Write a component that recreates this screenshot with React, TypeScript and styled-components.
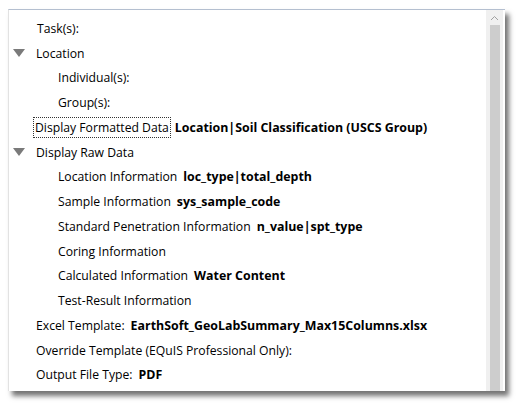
import React from "react";
import styled, { createGlobalStyle } from "styled-components";

const Global = createGlobalStyle`
  html, body { margin: 0; padding: 0; background: #ffffff; }
  body { font-family: "Open Sans", "Noto Sans", sans-serif; }
`;

const Page = styled.div`
  width: 521px;
  height: 408px;
  padding: 9px 0 0 8px;
  box-sizing: border-box;
`;

const Panel = styled.div`
  width: 497px;
  height: 382px;
  background: #fff;
  border-top: 1px solid #b4bfd0;
  border-left: 1px solid #e2e2e2;
  box-shadow: 4px 5px 5px rgba(0, 0, 0, 0.55);
  display: flex;
  box-sizing: border-box;
`;

const List = styled.div`
  flex: 1;
  display: flex;
  flex-direction: column;
  padding-top: 6px;
`;

const Row = styled.div<{ $indent: number }>`
  height: 24.75px;
  display: flex;
  align-items: center;
  padding-left: ${(p) => p.$indent}px;
  font-size: 12.2px;
  color: #000;
  white-space: nowrap;
`;

const Arrow = styled.span`
  width: 0;
  height: 0;
  border-left: 6px solid transparent;
  border-right: 6px solid transparent;
  border-top: 8px solid #7a7a7a;
  margin-left: -22px;
  margin-right: 10px;
`;

const Label = styled.span<{ $focus?: boolean }>`
  padding: 0 1px;
  outline: ${(p) => (p.$focus ? "1px dotted #333" : "none")};
  outline-offset: 0;
  line-height: 19px;
`;

const Value = styled.span`
  font-weight: 700;
  font-size: 12.4px;
  margin-left: 5px;
  color: #000;
`;

const Scrollbar = styled.div`
  width: 17px;
  background: #f0f0f0;
  display: flex;
  flex-direction: column;
  align-items: center;
  margin-right: 2px;
`;

const ArrowBtn = styled.div`
  height: 15px;
  display: flex;
  align-items: center;
  justify-content: center;
`;

const Thumb = styled.div`
  width: 10px;
  flex: 1;
  background: #cdcdcd;
`;

type Item = { label: string; value?: string; indent: number; arrow?: boolean; focus?: boolean };

const items: Item[] = [
  { label: "Task(s):", indent: 27 },
  { label: "Location", indent: 26, arrow: true },
  { label: "Individual(s):", indent: 48 },
  { label: "Group(s):", indent: 48 },
  { label: "Display Formatted Data", value: "Location|Soil Classification (USCS Group)", indent: 25, focus: true },
  { label: "Display Raw Data", indent: 26, arrow: true },
  { label: "Location Information", value: "loc_type|total_depth", indent: 48 },
  { label: "Sample Information", value: "sys_sample_code", indent: 48 },
  { label: "Standard Penetration Information", value: "n_value|spt_type", indent: 48 },
  { label: "Coring Information", indent: 48 },
  { label: "Calculated Information", value: "Water Content", indent: 48 },
  { label: "Test-Result Information", indent: 48 },
  { label: "Excel Template:", value: "EarthSoft_GeoLabSummary_Max15Columns.xlsx", indent: 26 },
  { label: "Override Template (EQuIS Professional Only):", indent: 26 },
  { label: "Output File Type:", value: "PDF", indent: 26 },
];

export default function App() {
  return (
    <Page>
      <Global />
      <Panel>
        <List>
          {items.map((it, i) => (
            <Row key={i} $indent={it.indent}>
              {it.arrow && <Arrow />}
              <Label $focus={it.focus}>{it.label}</Label>
              {it.value && <Value>{it.value}</Value>}
            </Row>
          ))}
        </List>
        <Scrollbar>
          <ArrowBtn>
            <svg width="9" height="6" viewBox="0 0 9 6">
              <path d="M1 5 L4.5 1.5 L8 5" fill="none" stroke="#a0a0a0" strokeWidth="1" />
            </svg>
          </ArrowBtn>
          <Thumb />
        </Scrollbar>
      </Panel>
    </Page>
  );
}
